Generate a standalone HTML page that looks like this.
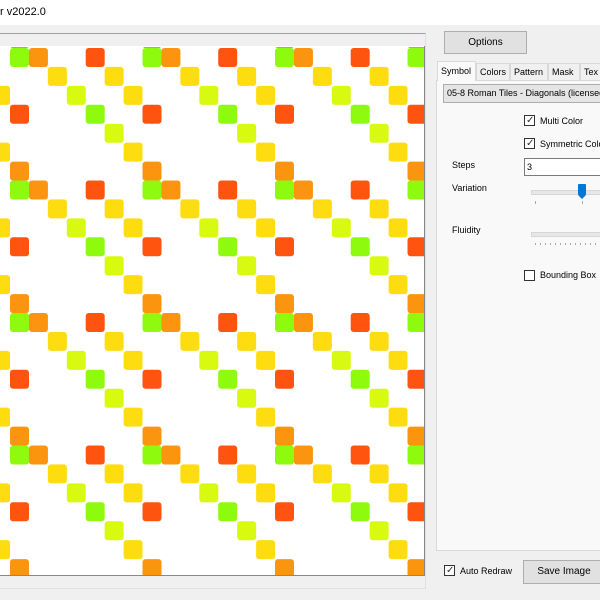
<!DOCTYPE html>
<html><head><style>
body{margin:0;width:600px;height:600px;overflow:hidden;background:#f0f0f0;font-family:"Liberation Sans",sans-serif;font-size:9px;color:#000;position:relative}
.a{position:absolute;white-space:nowrap}
.btn{position:absolute;background:#e1e1e1;border:1px solid #adadad;box-sizing:border-box;text-align:center;font-size:10px}
.cb{position:absolute;width:11px;height:11px;border:1px solid #333;background:#fff;box-sizing:border-box}
.ck{position:absolute;left:1px;top:-1px;font-size:10px;color:#333}
.tab{position:absolute;top:63px;height:17px;line-height:16px;border:1px solid #d9d9d9;border-bottom:none;box-sizing:border-box;padding:0 3px;font-size:9px;background:#f0f0f0;white-space:nowrap;overflow:hidden}
</style></head><body>
<div class="a" style="left:0;top:0;width:600px;height:25px;background:#fff"></div>
<div class="a" style="left:0;top:6px;font-size:11px">r v2022.0</div>
<div class="a" style="left:0;top:33px;width:426px;height:556px;border-top:1px solid #a0a0a0;border-right:1px solid #e0e0e0;border-bottom:1px solid #e0e0e0;box-sizing:border-box"></div>
<div class="a" style="left:0;top:46px;width:425px;height:530px;border-right:1px solid #888;border-bottom:1px solid #888;box-sizing:border-box;background:#fff"></div>
<svg class="a" style="left:0;top:47px" width="424" height="528">
<defs>
<pattern id="p" x="10" y="1" width="132.5" height="132.5" patternUnits="userSpaceOnUse">
<g>
<rect x="0" y="0" width="19" height="19" rx="3" fill="#8efb0e"/>
<rect x="18.93" y="0" width="19" height="19" rx="3" fill="#fb950f"/>
<rect x="75.7" y="0" width="19" height="19" rx="3" fill="#fe5410"/>
<rect x="37.86" y="18.93" width="19" height="19" rx="3" fill="#fddc10"/>
<rect x="94.65" y="18.93" width="19" height="19" rx="3" fill="#fddc10"/>
<rect x="56.8" y="37.86" width="19" height="19" rx="3" fill="#d8fa10"/>
<rect x="113.6" y="37.86" width="19" height="19" rx="3" fill="#fddc10"/>
<rect x="0" y="56.8" width="19" height="19" rx="3" fill="#fe5410"/>
<rect x="75.7" y="56.8" width="19" height="19" rx="3" fill="#8efb0e"/>
<rect x="94.65" y="75.7" width="19" height="19" rx="3" fill="#d8fa10"/>
<rect x="113.6" y="94.65" width="19" height="19" rx="3" fill="#fddc10"/>
<rect x="0" y="113.6" width="19" height="19" rx="3" fill="#fb950f"/>
</g>
</pattern>
</defs>
<rect x="0" y="0" width="424" height="528" fill="url(#p)"/>
</svg>
<div class="btn" style="left:444px;top:31px;width:83px;height:23px;line-height:21px">Options</div>
<div class="a" style="left:436px;top:80px;width:170px;height:471px;border:1px solid #d9d9d9;box-sizing:border-box;background:#f9f9f9"></div>
<div class="tab" style="left:437px;top:61px;height:20px;background:#f9f9f9;width:39px;line-height:18px">Symbol</div>
<div class="tab" style="left:476px;width:34px">Colors</div>
<div class="tab" style="left:510px;width:38px">Pattern</div>
<div class="tab" style="left:548px;width:32px">Mask</div>
<div class="tab" style="left:580px;width:30px">Tex</div>
<div class="a" style="left:443px;top:84px;width:160px;height:19px;background:#e5e5e5;border:1px solid #adadad;box-sizing:border-box;line-height:17px;padding-left:3px;overflow:hidden;font-size:9px">05-8 Roman Tiles - Diagonals (licensed)</div>
<div class="cb" style="left:524px;top:115px"><span class="ck">✓</span></div><div class="a" style="left:540px;top:116px">Multi Color</div>
<div class="cb" style="left:524px;top:138px"><span class="ck">✓</span></div><div class="a" style="left:540px;top:139px">Symmetric Color</div>
<div class="a" style="left:452px;top:160px">Steps</div>
<div class="a" style="left:524px;top:158px;width:80px;height:18px;background:#fff;border:1px solid #7a7a7a;box-sizing:border-box;padding-left:2px;line-height:16px">3</div>
<div class="a" style="left:452px;top:183px">Variation</div>
<div class="a" style="left:531px;top:190px;width:70px;height:3px;background:#e7e7e7;border:1px solid #d6d6d6"></div>
<div class="a" style="left:578px;top:184px;width:8px;height:11px;background:#0078d7;border-radius:1px"></div>
<div class="a" style="left:578px;top:195px;width:0;height:0;border-left:4px solid transparent;border-right:4px solid transparent;border-top:4px solid #0078d7"></div>
<div class="a" style="left:535px;top:201px;width:1px;height:3px;background:#aaa"></div>
<div class="a" style="left:582px;top:201px;width:1px;height:3px;background:#aaa"></div>
<div class="a" style="left:452px;top:225px">Fluidity</div>
<div class="a" style="left:531px;top:232px;width:70px;height:3px;background:#e7e7e7;border:1px solid #d6d6d6"></div>
<div class="a" style="left:535px;top:243px;width:66px;height:2px;background:repeating-linear-gradient(90deg,#aaa 0 1px,transparent 1px 5px)"></div>
<div class="cb" style="left:524px;top:270px"></div><div class="a" style="left:540px;top:270px">Bounding Box</div>
<div class="cb" style="left:444px;top:565px"><span class="ck">✓</span></div><div class="a" style="left:460px;top:566px">Auto Redraw</div>
<div class="btn" style="left:523px;top:560px;width:82px;height:24px;line-height:22px">Save Image</div>
</body></html>
